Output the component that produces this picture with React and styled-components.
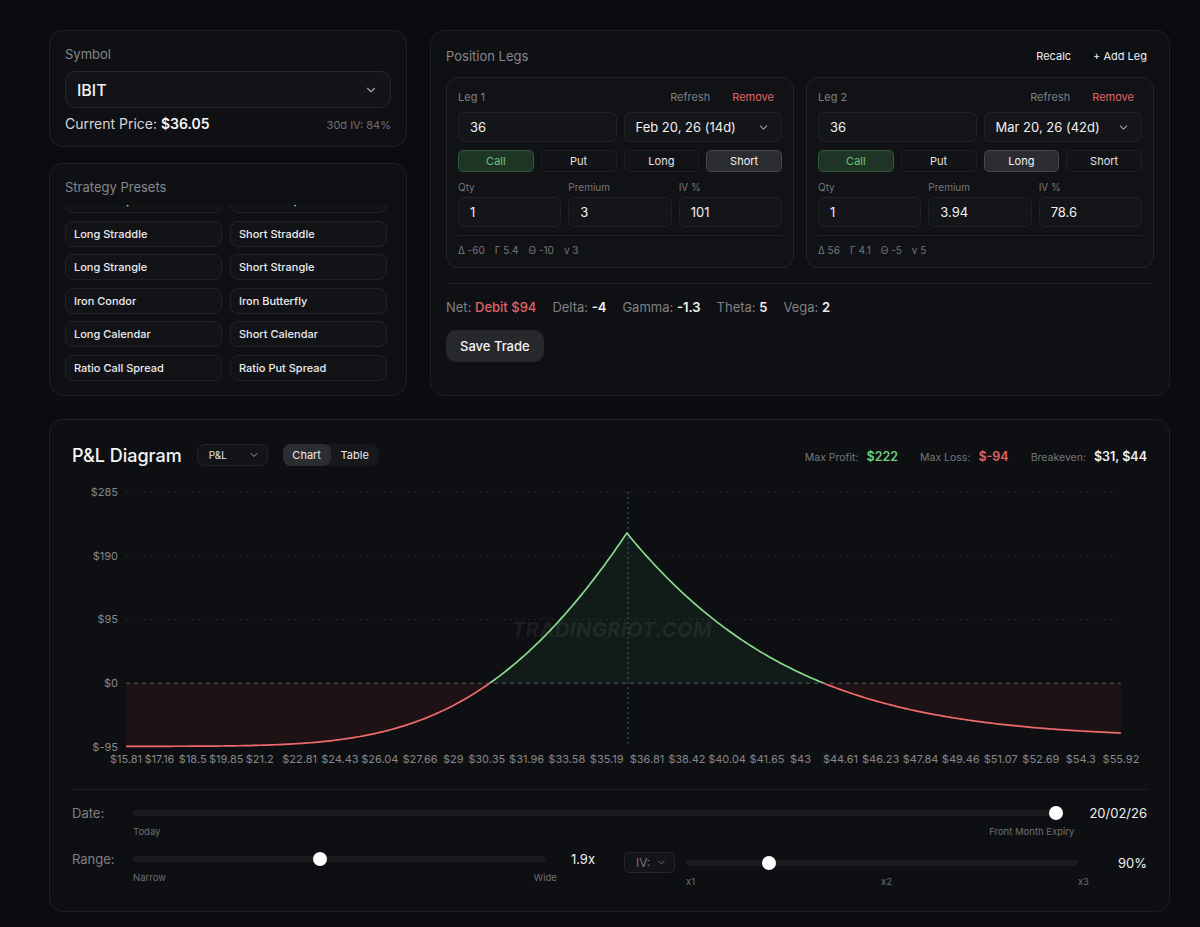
import React, { useLayoutEffect, useRef } from "react";
import styled, { createGlobalStyle, css } from "styled-components";
import { ChevronDown } from "lucide-react";

const GlobalStyle = createGlobalStyle`
  * { box-sizing: border-box; }
  body {
    margin: 0;
    background: #0b0c0f;
    font-family: Inter, "Noto Sans", sans-serif;
    color: #e8e8ea;
  }
`;

const Page = styled.div`
  min-height: 927px;
  padding: 30px 30px 14px 49px;
  display: flex;
  flex-direction: column;
  gap: 23px;
`;

const TopRow = styled.div`
  display: grid;
  grid-template-columns: 358px 1fr;
  gap: 23px;
`;

const LeftCol = styled.div`
  display: flex;
  flex-direction: column;
  gap: 16px;
`;

const Card = styled.section`
  background: #0f1013;
  border: 1px solid #1f2024;
  border-radius: 14px;
  padding: 15px 15px 14px;
  display: flex;
  flex-direction: column;
  min-height: 0;
`;

const StretchCard = styled(Card)`
  flex: 1;
`;

const CardTitle = styled.div`
  font-size: 13px;
  line-height: 16px;
  color: #86878c;
`;

/* symbol */
const SymbolSelect = styled.div`
  margin-top: 9px;
  height: 37px;
  padding: 0 12px 0 11px;
  display: flex;
  align-items: center;
  justify-content: space-between;
  background: #131417;
  border: 1px solid #25262a;
  border-radius: 10px;
  font-size: 16px;
  font-weight: 500;
  color: #f2f2f3;
`;

const PriceRow = styled.div`
  margin-top: 7px;
  display: flex;
  align-items: baseline;
  justify-content: space-between;
`;

const PriceText = styled.span`
  font-size: 14px;
  color: #d6d6d9;
  strong {
    font-weight: 600;
    color: #f5f5f6;
  }
`;

const IvText = styled.span`
  font-size: 11px;
  color: #707176;
`;

/* presets */
const PresetScroll = styled.div`
  margin-top: 10px;
  height: 176px;
  overflow-y: auto;
  &::-webkit-scrollbar {
    width: 5px;
  }
  &::-webkit-scrollbar-track {
    background: transparent;
  }
  &::-webkit-scrollbar-thumb {
    background: #18191c;
    border-radius: 3px;
  }
`;

const PresetGrid = styled.div`
  display: grid;
  grid-template-columns: 1fr 1fr;
  gap: 7.5px 8px;
  padding-right: 4px;
`;

const PresetButton = styled.button`
  height: 26px;
  padding: 0 8px;
  text-align: left;
  background: #121316;
  border: 1px solid #222327;
  border-radius: 8px;
  font-family: inherit;
  font-size: 11px;
  font-weight: 500;
  color: #ececee;
`;

/* legs */
const LegsHeader = styled.div`
  height: 20px;
  display: flex;
  align-items: center;
  justify-content: space-between;
`;

const HeaderActions = styled.div`
  display: flex;
  gap: 22px;
  padding-right: 7px;
  font-size: 11px;
  color: #eeeef0;
`;

const LegGrid = styled.div`
  margin-top: 11px;
  display: grid;
  grid-template-columns: 1fr 1fr;
  gap: 12px;
`;

const LegCard = styled.div`
  padding: 11px 11px 10px;
  background: #111215;
  border: 1px solid #24252a;
  border-radius: 12px;
`;

const LegHead = styled.div`
  height: 16px;
  display: flex;
  align-items: center;
  gap: 22px;
  padding-right: 8px;
  font-size: 11px;
  color: #7d7e83;
`;

const LegName = styled.span`
  flex: 1;
`;

const LegLink = styled.span`
  color: ${(p) => (p.$danger ? "#e0636a" : "#7d7e83")};
`;

const Cols = styled.div`
  margin-top: ${(p) => p.$mt}px;
  display: grid;
  grid-template-columns: repeat(${(p) => p.$n}, 1fr);
  gap: 7px;
`;

const InputBox = styled.div`
  height: 30px;
  padding: 0 11px;
  display: flex;
  align-items: center;
  justify-content: space-between;
  background: #141518;
  border: 1px solid #212226;
  border-radius: 6px;
  font-size: 13px;
  color: #f0f0f2;
`;

const Toggle = styled.button`
  height: 22px;
  border-radius: 5px;
  font-family: inherit;
  font-size: 11px;
  color: #e4e4e6;
  background: #121316;
  border: 1px solid #1f2024;
  ${(p) =>
    p.$variant === "green" &&
    css`
      background: #1e3526;
      border-color: #2f5939;
      color: #6cc47a;
    `}
  ${(p) =>
    p.$variant === "active" &&
    css`
      background: #2b2c30;
      border-color: #46474b;
      color: #f2f2f3;
    `}
`;

const FieldCaption = styled.div`
  margin-bottom: 4px;
  font-size: 10px;
  line-height: 12px;
  color: #75767b;
`;

const Greeks = styled.div`
  margin-top: 8px;
  padding-top: 7px;
  border-top: 1px solid #202125;
  display: flex;
  gap: 10px;
  font-size: 10px;
  line-height: 14px;
  color: #75767b;
`;

const Divider = styled.div`
  margin-top: ${(p) => p.$mt}px;
  height: 1px;
  background: #1f2024;
`;

const NetRow = styled.div`
  margin-top: 15px;
  display: flex;
  gap: 16px;
  font-size: 13px;
  line-height: 16px;
  color: #7f8085;
`;

const NetValue = styled.span`
  font-weight: ${(p) => (p.$danger ? 500 : 600)};
  color: ${(p) => (p.$danger ? "#e0636a" : "#f2f2f3")};
`;

const SaveButton = styled.button`
  margin-top: 15px;
  align-self: flex-start;
  height: 32px;
  padding: 0 14px;
  background: #27282c;
  border: none;
  border-radius: 10px;
  font-family: inherit;
  font-size: 13px;
  font-weight: 500;
  color: #f3f3f4;
`;

/* P&L */
const PnlCard = styled.section`
  background: #0e0f12;
  border: 1px solid #1f2024;
  border-radius: 14px;
  padding: 24px 22px 23px;
`;

const PnlHeader = styled.div`
  height: 22px;
  display: flex;
  align-items: center;
`;

const PnlTitle = styled.h2`
  margin: 0 15px 0 0;
  font-size: 18px;
  font-weight: 500;
  color: #f4f4f5;
`;

const MiniSelect = styled.div`
  width: ${(p) => p.$w}px;
  height: ${(p) => p.$h}px;
  padding: 0 7px 0 11px;
  display: flex;
  align-items: center;
  justify-content: space-between;
  flex: none;
  background: #131417;
  border: 1px solid #25262a;
  border-radius: ${(p) => p.$r}px;
  font-size: ${(p) => p.$fs}px;
  color: ${(p) => p.$color || "#e8e8ea"};
`;

const Tabs = styled.div`
  margin-left: 15px;
  display: flex;
  background: #17181b;
  border-radius: 8px;
`;

const Tab = styled.button`
  width: 48px;
  height: 22px;
  border: none;
  border-radius: 8px;
  font-family: inherit;
  font-size: 11px;
  color: #ececee;
  background: ${(p) => (p.$active ? "#2c2d31" : "transparent")};
`;

const Stats = styled.div`
  margin-left: auto;
  display: flex;
  align-items: baseline;
  gap: 22px;
`;

const StatLabel = styled.span`
  margin-right: 8px;
  font-size: 10.5px;
  color: #75767b;
`;

const StatValue = styled.span`
  font-size: 12.5px;
  font-weight: 600;
  color: ${(p) => p.$color};
`;

const ChartSvg = styled.svg`
  display: block;
  margin-top: 14px;
  font-family: Inter, "Noto Sans", sans-serif;
`;

const Controls = styled.div`
  padding-top: 16px;
  display: flex;
  flex-direction: column;
  gap: 14px;
`;

const CtrlRow = styled.div`
  display: flex;
  align-items: flex-start;
`;

const CtrlHalves = styled.div`
  display: grid;
  grid-template-columns: 1fr 1fr;
  gap: 29px;
`;

const RowLabel = styled.div`
  width: 61px;
  flex: none;
  font-size: 13px;
  line-height: 14px;
  color: #7f8085;
`;

const RowValue = styled.div`
  margin-left: ${(p) => p.$ml}px;
  margin-top: ${(p) => p.$mt || 0}px;
  min-width: ${(p) => p.$w || 0}px;
  text-align: right;
  font-size: 13px;
  line-height: 14px;
  color: #efeff1;
`;

const SliderBox = styled.div`
  flex: 1;
  margin-left: ${(p) => p.$ml || 0}px;
  margin-top: ${(p) => p.$mt || 0}px;
`;

const TrackWrap = styled.div`
  position: relative;
  height: 14px;
  margin-right: 11px;
`;

const Track = styled.div`
  position: absolute;
  left: 0;
  right: 0;
  top: 4px;
  height: 6px;
  border-radius: 3px;
  background: #1a1b1e;
`;

const Thumb = styled.div`
  position: absolute;
  top: 0;
  width: 14px;
  height: 14px;
  border-radius: 50%;
  background: #ffffff;
`;

const SliderLabels = styled.div`
  margin-top: 6px;
  display: flex;
  justify-content: space-between;
  font-size: 9.5px;
  line-height: 12px;
  color: #6e6f74;
`;

function Slider({ value, labels, ml, mt }) {
  return (
    <SliderBox $ml={ml} $mt={mt}>
      <TrackWrap>
        <Track />
        <Thumb style={{ left: `calc(${value} * (100% - 14px))` }} />
      </TrackWrap>
      <SliderLabels>
        {labels.map((l) => (
          <span key={l}>{l}</span>
        ))}
      </SliderLabels>
    </SliderBox>
  );
}

/* chart maths */
const normCdf = (x) => {
  const t = 1 / (1 + 0.2316419 * Math.abs(x));
  const d = 0.3989423 * Math.exp((-x * x) / 2);
  const p =
    d * t * (0.3193815 + t * (-0.3565638 + t * (1.781478 + t * (-1.821256 + t * 1.330274))));
  return x > 0 ? 1 - p : p;
};
const callPrice = (S, K, T, v, r) => {
  const sd = v * Math.sqrt(T);
  const d1 = (Math.log(S / K) + (r + (v * v) / 2) * T) / sd;
  return S * normCdf(d1) - K * Math.exp(-r * T) * normCdf(d1 - sd);
};
const pnlAt = (S) =>
  100 * (-Math.max(S - 36, 0) + callPrice(S, 36, 28 / 365, 0.786, 0.045)) - 94;

const W = 1075;
const H = 290;
const PMIN = 15.81;
const PMAX = 55.92;
const X0 = 54;
const X1 = 1049;
const sx = (p) => X0 + ((p - PMIN) / (PMAX - PMIN)) * (X1 - X0);
const sy = (v) => 12 + ((285 - v) / 380) * 255;
const ZERO = sy(0);

const xTicks = [
  15.81, 17.16, 18.5, 19.85, 21.2, 22.81, 24.43, 26.04, 27.66, 29, 30.35, 31.96, 33.58,
  35.19, 36.81, 38.42, 40.04, 41.65, 43, 44.61, 46.23, 47.84, 49.46, 51.07, 52.69, 54.3, 55.92,
];
const yTicks = [285, 190, 95, 0, -95];

function buildCurve() {
  const prices = [];
  for (let i = 0; i <= 400; i++) prices.push(PMIN + (i * (PMAX - PMIN)) / 400);
  prices.push(36);
  prices.sort((a, b) => a - b);
  const pts = prices.map((p) => [sx(p), sy(pnlAt(p))]);
  const line = pts.map(([x, y], i) => `${i ? "L" : "M"}${x.toFixed(2)},${y.toFixed(2)}`).join("");
  const area = `${line}L${X1},${ZERO}L${X0},${ZERO}Z`;
  return { line, area };
}

function PnlChart() {
  const { line, area } = buildCurve();
  const spotX = sx(36.05);
  return (
    <ChartSvg width={W} height={H} viewBox={`0 0 ${W} ${H}`}>
      <defs>
        <clipPath id="above">
          <rect x={X0} y={0} width={X1 - X0} height={ZERO} />
        </clipPath>
        <clipPath id="below">
          <rect x={X0} y={ZERO} width={X1 - X0} height={H - ZERO} />
        </clipPath>
      </defs>
      {[285, 190, 95].map((v) => (
        <line key={v} x1={X0} x2={X1} y1={sy(v)} y2={sy(v)} stroke="#24252a" strokeDasharray="2 4" />
      ))}
      <path d={area} fill="rgba(74,222,128,0.06)" clipPath="url(#above)" />
      <path d={area} fill="rgba(239,68,68,0.07)" clipPath="url(#below)" />
      <line x1={X0} x2={X1} y1={ZERO} y2={ZERO} stroke="#55575d" strokeDasharray="4 4" />
      <line x1={spotX} x2={spotX} y1={12} y2={267} stroke="#3f5f95" strokeDasharray="2 3" />
      <text
        x={540}
        y={157}
        textAnchor="middle"
        fontSize="20"
        fontStyle="italic"
        fontWeight="700"
        letterSpacing="0.5"
        fill="#ffffff"
        fillOpacity="0.08"
      >
        TRADINGRIOT.COM
      </text>
      <path d={line} fill="none" stroke="#8ad98c" strokeWidth="1.7" clipPath="url(#above)" />
      <path d={line} fill="none" stroke="#ee6b6d" strokeWidth="1.7" clipPath="url(#below)" />
      {yTicks.map((v) => (
        <text key={v} x={46} y={sy(v)} dy="0.35em" textAnchor="end" fontSize="11" fill="#86878c">
          {v < 0 ? `$-${-v}` : `$${v}`}
        </text>
      ))}
      {xTicks.map((p) => (
        <text key={p} x={sx(p)} y={283} textAnchor="middle" fontSize="11" fill="#86878c">
          ${p}
        </text>
      ))}
    </ChartSvg>
  );
}

const presets = [
  "Long Call",
  "Short Call",
  "Long Put",
  "Short Put",
  "Bull Call Spread",
  "Bear Put Spread",
  "Long Straddle",
  "Short Straddle",
  "Long Strangle",
  "Short Strangle",
  "Iron Condor",
  "Iron Butterfly",
  "Long Calendar",
  "Short Calendar",
  "Ratio Call Spread",
  "Ratio Put Spread",
];

const legs = [
  {
    name: "Leg 1",
    strike: "36",
    expiry: "Feb 20, 26 (14d)",
    side: "Short",
    qty: "1",
    premium: "3",
    iv: "101",
    greeks: ["Δ -60", "Γ 5.4", "Θ -10", "v 3"],
  },
  {
    name: "Leg 2",
    strike: "36",
    expiry: "Mar 20, 26 (42d)",
    side: "Long",
    qty: "1",
    premium: "3.94",
    iv: "78.6",
    greeks: ["Δ 56", "Γ 4.1", "Θ -5", "v 5"],
  },
];

function Leg({ leg }) {
  return (
    <LegCard>
      <LegHead>
        <LegName>{leg.name}</LegName>
        <LegLink>Refresh</LegLink>
        <LegLink $danger>Remove</LegLink>
      </LegHead>
      <Cols $n={2} $mt={7}>
        <InputBox>{leg.strike}</InputBox>
        <InputBox>
          {leg.expiry}
          <ChevronDown size={13} color="#a0a1a6" />
        </InputBox>
      </Cols>
      <Cols $n={4} $mt={8}>
        <Toggle $variant="green">Call</Toggle>
        <Toggle>Put</Toggle>
        <Toggle $variant={leg.side === "Long" ? "active" : undefined}>Long</Toggle>
        <Toggle $variant={leg.side === "Short" ? "active" : undefined}>Short</Toggle>
      </Cols>
      <Cols $n={3} $mt={9}>
        <div>
          <FieldCaption>Qty</FieldCaption>
          <InputBox>{leg.qty}</InputBox>
        </div>
        <div>
          <FieldCaption>Premium</FieldCaption>
          <InputBox>{leg.premium}</InputBox>
        </div>
        <div>
          <FieldCaption>IV %</FieldCaption>
          <InputBox>{leg.iv}</InputBox>
        </div>
      </Cols>
      <Greeks>
        {leg.greeks.map((g) => (
          <span key={g}>{g}</span>
        ))}
      </Greeks>
    </LegCard>
  );
}

export default function App() {
  const scrollRef = useRef(null);
  useLayoutEffect(() => {
    const el = scrollRef.current;
    if (el) el.scrollTop = el.scrollHeight;
  }, []);

  return (
    <Page>
      <GlobalStyle />
      <TopRow>
        <LeftCol>
          <Card>
            <CardTitle>Symbol</CardTitle>
            <SymbolSelect>
              IBIT
              <ChevronDown size={14} color="#a0a1a6" />
            </SymbolSelect>
            <PriceRow>
              <PriceText>
                Current Price: <strong>$36.05</strong>
              </PriceText>
              <IvText>30d IV: 84%</IvText>
            </PriceRow>
          </Card>
          <StretchCard>
            <CardTitle>Strategy Presets</CardTitle>
            <PresetScroll ref={scrollRef}>
              <PresetGrid>
                {presets.map((p) => (
                  <PresetButton key={p}>{p}</PresetButton>
                ))}
              </PresetGrid>
            </PresetScroll>
          </StretchCard>
        </LeftCol>

        <Card>
          <LegsHeader>
            <CardTitle>Position Legs</CardTitle>
            <HeaderActions>
              <span>Recalc</span>
              <span>+ Add Leg</span>
            </HeaderActions>
          </LegsHeader>
          <LegGrid>
            {legs.map((leg) => (
              <Leg key={leg.name} leg={leg} />
            ))}
          </LegGrid>
          <Divider $mt={15} />
          <NetRow>
            <span>
              Net: <NetValue $danger>Debit $94</NetValue>
            </span>
            <span>
              Delta: <NetValue>-4</NetValue>
            </span>
            <span>
              Gamma: <NetValue>-1.3</NetValue>
            </span>
            <span>
              Theta: <NetValue>5</NetValue>
            </span>
            <span>
              Vega: <NetValue>2</NetValue>
            </span>
          </NetRow>
          <SaveButton>Save Trade</SaveButton>
        </Card>
      </TopRow>

      <PnlCard>
        <PnlHeader>
          <PnlTitle>P&amp;L Diagram</PnlTitle>
          <MiniSelect $w={71} $h={22} $r={8} $fs={10}>
            P&amp;L
            <ChevronDown size={12} color="#a0a1a6" />
          </MiniSelect>
          <Tabs>
            <Tab $active>Chart</Tab>
            <Tab>Table</Tab>
          </Tabs>
          <Stats>
            <span>
              <StatLabel>Max Profit:</StatLabel>
              <StatValue $color="#6fd07c">$222</StatValue>
            </span>
            <span>
              <StatLabel>Max Loss:</StatLabel>
              <StatValue $color="#e0636a">$-94</StatValue>
            </span>
            <span>
              <StatLabel>Breakeven:</StatLabel>
              <StatValue $color="#f2f2f3">$31, $44</StatValue>
            </span>
          </Stats>
        </PnlHeader>

        <PnlChart />

        <Divider $mt={19} />
        <Controls>
          <CtrlRow>
            <RowLabel>Date:</RowLabel>
            <Slider value={1} labels={["Today", "Front Month Expiry"]} />
            <RowValue $ml={15}>20/02/26</RowValue>
          </CtrlRow>
          <CtrlHalves>
            <CtrlRow>
              <RowLabel>Range:</RowLabel>
              <Slider value={0.45} labels={["Narrow", "Wide"]} />
              <RowValue $ml={14}>1.9x</RowValue>
            </CtrlRow>
            <CtrlRow>
              <MiniSelect $w={51} $h={21} $r={5} $fs={12} $color="#75767b">
                IV:
                <ChevronDown size={11} color="#75767b" />
              </MiniSelect>
              <Slider value={0.2} labels={["x1", "x2", "x3"]} ml={11} mt={3.5} />
              <RowValue $ml={26} $mt={3.5} $w={32}>
                90%
              </RowValue>
            </CtrlRow>
          </CtrlHalves>
        </Controls>
      </PnlCard>
    </Page>
  );
}
